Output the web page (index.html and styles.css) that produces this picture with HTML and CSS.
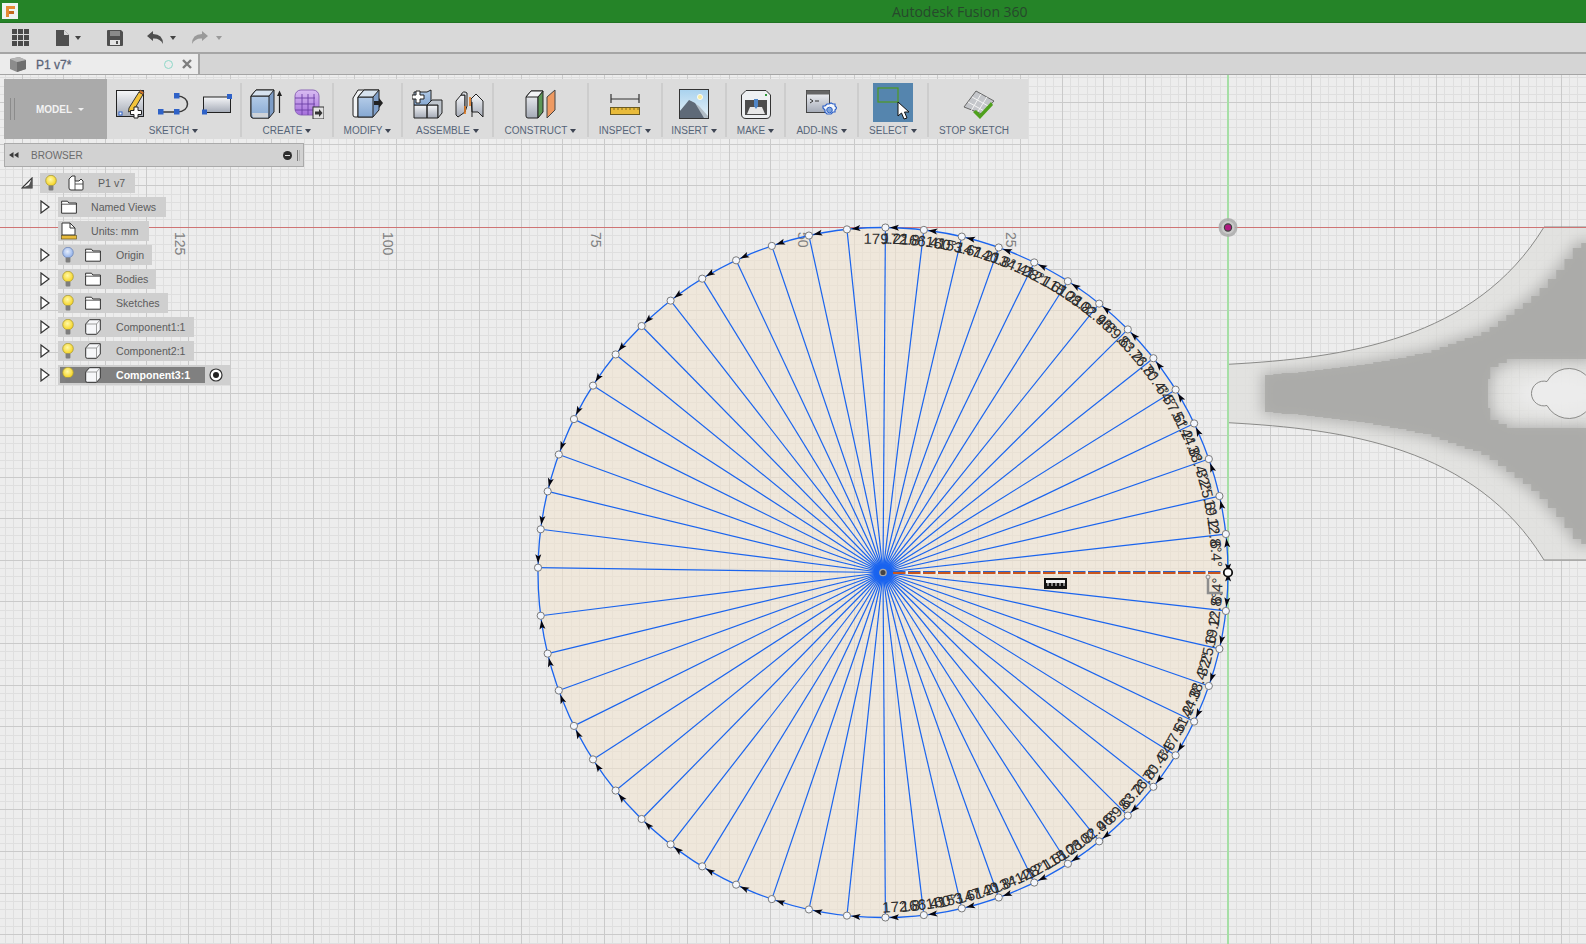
FILE: index.html
```html
<!DOCTYPE html>
<html lang="en">
<head>
<meta charset="utf-8">
<title>Autodesk Fusion 360</title>
<link rel="stylesheet" href="styles.css">
</head>
<body>
<svg class="defs" width="0" height="0" aria-hidden="true">
  <defs>
    <linearGradient id="gGrey" x1="0" y1="0" x2="0" y2="1"><stop offset="0" stop-color="#f6f7f9"/><stop offset="1" stop-color="#a4aab6"/></linearGradient>
    <linearGradient id="gBlue" x1="0" y1="0" x2="0" y2="1"><stop offset="0" stop-color="#b4cce8"/><stop offset="1" stop-color="#86a8d2"/></linearGradient>
    <linearGradient id="gPurple" x1="0" y1="0" x2="0" y2="1"><stop offset="0" stop-color="#d9bdf2"/><stop offset="1" stop-color="#a56fdc"/></linearGradient>
    <linearGradient id="gSky" x1="0" y1="0" x2="0" y2="1"><stop offset="0" stop-color="#a9d2ee"/><stop offset="1" stop-color="#e8f2f8"/></linearGradient>
    <radialGradient id="gBulb" cx=".45" cy=".4" r=".6"><stop offset="0" stop-color="#fff9a8"/><stop offset="1" stop-color="#f5d21e"/></radialGradient>
    <radialGradient id="gBulbBlue" cx=".45" cy=".4" r=".6"><stop offset="0" stop-color="#e6eefc"/><stop offset="1" stop-color="#8eaee8"/></radialGradient>
    <filter id="soft" x="-20%" y="-20%" width="140%" height="140%"><feGaussianBlur stdDeviation="7"/></filter>
    <filter id="softer" x="-40%" y="-60%" width="180%" height="220%"><feGaussianBlur stdDeviation="8"/></filter>
    <filter id="hubBlur" x="-50%" y="-50%" width="200%" height="200%"><feGaussianBlur stdDeviation="2"/></filter>
    <clipPath id="bodyClip"><path d="M1228 364.3C1345 358 1475 340 1544 227H1586V560H1544C1475 447 1345 429 1228 422.7Z"/></clipPath>
    <symbol id="bulb" viewBox="0 0 12 16"><circle cx="6" cy="5.6" r="5.3" fill="url(#gBulb)" stroke="#a89a3a" stroke-width=".8"/><rect x="3.6" y="10.5" width="4.8" height="5" rx="1" fill="#7d7d7d"/></symbol>
    <symbol id="bulbBlue" viewBox="0 0 12 16"><circle cx="6" cy="5.6" r="5.3" fill="url(#gBulbBlue)" stroke="#7088b8" stroke-width=".8"/><rect x="3.6" y="10.5" width="4.8" height="5" rx="1" fill="#7d7d7d"/></symbol>
    <symbol id="folder" viewBox="0 0 16 14"><path d="M.6 3.5V1.2H6.5L7.8 3H15.4V13.2H.6Z" fill="#fff" stroke="#333" stroke-width="1"/><path d="M.6 4.2H15.4" stroke="#333" stroke-width=".8"/></symbol>
    <symbol id="cube" viewBox="0 0 16 16"><path d="M.7 5 4.5.7H15.3V11L11.5 15.3H2.2Q.7 15.3.7 13.8Z" fill="#f6f7f9" stroke="#333" stroke-width="1"/><path d="M.7 5H11.5V15.3M11.5 5 15.3.7" fill="none" stroke="#777" stroke-width=".7"/></symbol>
    <symbol id="expand" viewBox="0 0 10 14"><path d="M1 1 9 7 1 13Z" fill="#fff" stroke="#333" stroke-width="1.2"/></symbol>
  </defs>
</svg>

<header class="titlebar">
  <svg class="applogo" width="16" height="16" viewBox="0 0 16 16"><rect width="16" height="16" fill="#eef3f2"/><path d="M4 3H13V6H7V8H12V11H7V14H4Z" fill="#e58b34"/><path d="M7 8H12V11H7Z" fill="#c46a1e"/></svg>
  <span class="apptitle">Autodesk Fusion 360</span>
</header>

<nav class="quickbar">
  <svg class="qa-grid" width="17" height="17" viewBox="0 0 17 17"><path fill="#4a4a4a" d="M0 0h5v5H0zM6 0h5v5H6zM12 0h5v5h-5zM0 6h5v5H0zM6 6h5v5H6zM12 6h5v5h-5zM0 12h5v5H0zM6 12h5v5H6zM12 12h5v5h-5z"/></svg>
  <span class="qa-file">
    <svg width="13" height="16" viewBox="0 0 13 16"><path fill="#4f4f4f" d="M0 0H8L13 5V16H0Z"/><path fill="#d8d8d8" d="M8 0V5H13L12 4 9 1Z"/></svg>
    <i class="caret dark"></i>
  </span>
  <svg class="qa-save" width="16" height="16" viewBox="0 0 16 16"><path fill="#4f4f4f" d="M0 1Q0 0 1 0H14L16 2V15Q16 16 15 16H1Q0 16 0 15Z"/><rect x="3" y="1" width="10" height="5" fill="#8a8a8a"/><rect x="3" y="10" width="10" height="5" fill="#e4e4e4"/><rect x="9" y="11" width="2" height="3" fill="#4f4f4f"/></svg>
  <span class="qa-undo">
    <svg width="16" height="13" viewBox="0 0 16 13"><path fill="#4f4f4f" d="M0 5 6 0V3Q16 3 16 13 13 7 6 7.5V10Z"/></svg>
    <i class="caret dark"></i>
  </span>
  <span class="qa-redo">
    <svg width="16" height="13" viewBox="0 0 16 13"><path fill="#9a9a9a" d="M16 5 10 0V3Q0 3 0 13 3 7 10 7.5V10Z"/></svg>
    <i class="caret soft"></i>
  </span>
</nav>

<div class="tabrow">
  <div class="tab">
    <svg class="tab-cube" width="16" height="15" viewBox="0 0 16 15"><path fill="#8c8c8c" d="M0 2 9 0 16 3V12L7 15 0 12Z"/><path fill="#6f6f6f" d="M7 5 16 3V12L7 15Z"/><path fill="#b5b5b5" d="M0 2 9 0 16 3 7 5Z"/></svg>
    <span class="tab-name">P1 v7*</span>
    <i class="tab-dot"></i>
    <svg class="tab-x" width="10" height="10" viewBox="0 0 10 10"><path d="M1 1 9 9M9 1 1 9" stroke="#7d7d7d" stroke-width="2.4"/></svg>
  </div>
</div>

<main class="canvas">
  <svg id="scene" class="scene" width="1586" height="869" viewBox="0 75 1586 869">
    <g id="grid"></g>
    <g class="body">
      <path class="body-fill" d="M1228 364.3C1345 358 1475 340 1544 227H1586V560H1544C1475 447 1345 429 1228 422.7Z"/>
      <g clip-path="url(#bodyClip)">
        <path id="bodyHalo" class="body-halo" filter="url(#soft)"/>
        <ellipse class="body-glow" cx="1556" cy="393.5" rx="42" ry="17" filter="url(#softer)"/>
        <path id="bodyCore" class="body-core"/>
      </g>
    </g>
    <path class="body-edge" d="M1586 227H1544C1475 340 1345 358 1228 364.3V422.7C1345 429 1475 447 1544 560H1586"/>
    <path class="keyhole" d="M1547 381.5A12.4 12.4 0 1 0 1547 405.5A25 25 0 1 0 1547 381.5Z"/>
    <line class="axis-red" x1="0" y1="227.5" x2="1586" y2="227.5"/>
    <line class="axis-green" x1="1228" y1="75" x2="1228" y2="944"/>
    <circle class="disc" cx="883" cy="572.5" r="345"/>
    <g class="axis">
      <text transform="translate(180 232) rotate(90)">125</text>
      <text transform="translate(388 232) rotate(90)">100</text>
      <text transform="translate(596 232) rotate(90)">75</text>
      <text transform="translate(803 232) rotate(90)">50</text>
      <text transform="translate(1011 232) rotate(90)">25</text>
    </g>
    <circle class="hub-glow" cx="883" cy="572.5" r="11" filter="url(#hubBlur)"/>
    <g id="spokes"></g>
    <circle class="rim" cx="883" cy="572.5" r="345"/>
    <g class="baseline">
      <line class="base-white" x1="893" y1="572.5" x2="1228" y2="572.5"/>
      <line class="base-blue" x1="893" y1="571.6" x2="1228" y2="571.6"/>
      <line class="base-orange" x1="893" y1="573" x2="1228" y2="573"/>
    </g>
    <g id="labels"></g>
    <g id="arrows"></g>
    <g id="points"></g>
    <circle class="hub" cx="883" cy="572.5" r="3.2"/>
    <circle class="zero" cx="1228" cy="572.5" r="4.2"/>
    <path class="constraint" d="M1208 577V593H1223M1208 593V588"/>
    <circle class="constraint-dot" cx="1208" cy="577" r="2"/>
    <g class="dim-icon" transform="translate(1044 578)">
      <rect width="23" height="11" fill="#111"/>
      <rect x="2" y="2" width="19" height="3" fill="#f2f2f2"/>
      <path d="M4 5V8M8 5V8M12 5V8M16 5V8M20 5V8" stroke="#f2f2f2" stroke-width="1"/>
    </g>
    <circle class="origin-a" cx="1228" cy="227.5" r="9.5"/>
    <circle class="origin-b" cx="1228" cy="227.5" r="6.5"/>
    <circle class="origin-c" cx="1228" cy="227.5" r="3.6"/>
  </svg>

  <section class="toolpanel">
    <div class="model">
      <i class="grip"></i>
      <span class="model-name">MODEL</span>
      <i class="caret light"></i>
    </div>

    <div class="group">
      <div class="tools">
        <svg width="30" height="30" viewBox="0 0 30 30"><rect x=".5" y="1.5" width="27" height="26" fill="url(#gGrey)" stroke="#222"/><rect x="3" y="23" width="3" height="3" fill="#fff" stroke="#2f62c8"/><path d="M13 19 23 3 27 5.5 18 21 12.5 23Z" fill="#f3c43a" stroke="#333"/><path d="M23 3 27 5.5 28 3.5 24.5 1Z" fill="#d9772c" stroke="#333" stroke-width=".6"/><path d="M18 18h4v3.5h3.5v4H22V29h-4v-3.5h-3.5v-4H18Z" fill="#fff" stroke="#222"/></svg>
        <svg width="32" height="22" viewBox="0 0 32 22"><path d="M3 19H19M19 3C33 3 33 19 19 19" fill="none" stroke="#3a3a3a" stroke-width="1.5"/><path fill="#2f62c8" d="M0 16h5.5v5.5H0zM16 16h5.5v5.5H16zM16 0h5.5v5.5H16z"/></svg>
        <svg width="30" height="21" viewBox="0 0 30 21"><rect x="1.5" y="3" width="27" height="15.5" fill="url(#gGrey)" stroke="#222"/><path fill="#2f62c8" d="M25 0h5v5h-5zM0 15.5h5v5H0z"/></svg>
      </div>
      <span class="group-label">SKETCH<i class="caret slate"></i></span>
    </div>

    <div class="group">
      <div class="tools">
        <svg width="32" height="30" viewBox="0 0 32 30"><path d="M1 7 6 1H24V23L19 29H3Q1 29 1 27Z" fill="#7d9cc6" stroke="#222"/><path d="M1 7H19V29H3Q1 29 1 27Z" fill="url(#gBlue)" stroke="#222"/><path d="M1 7 6 1H24L19 7Z" fill="#d6e2ef" stroke="#222"/><path d="M2 24H18V28.5H3Z" fill="#cfd3d8"/><path d="M29.5 24V5" stroke="#222" stroke-width="1.2"/><path d="M27 7 29.5 1.5 32 7Z" fill="#222"/></svg>
        <svg width="30" height="30" viewBox="0 0 30 30"><rect x="1" y="1" width="24" height="25" rx="6" fill="url(#gPurple)" stroke="#8d67b8"/><path d="M1 9H21M1 15H21M1 21H21M8 5V26M14 5V26M20 5V26" stroke="#6b3fa5" stroke-width=".9" fill="none"/><rect x="19" y="18" width="11" height="12" fill="#e2e2e2" stroke="#333"/><path d="M21 22.5H25V20L28.5 24 25 28V25.5H21Z" fill="#333"/></svg>
      </div>
      <span class="group-label">CREATE<i class="caret slate"></i></span>
    </div>

    <div class="group">
      <div class="tools">
        <svg width="31" height="30" viewBox="0 0 31 30"><path d="M1 9 6 1H12L6 28H3Q1 28 1 26Z" fill="#f1f3f5" stroke="#222"/><path d="M6 8 12 1H27V21L21 28H6Z" fill="#7f9fc9" stroke="#222"/><path d="M6 8H21V28H6Z" fill="url(#gBlue)" stroke="#222"/><path d="M6 8 12 1H27L21 8Z" fill="#d7e3ef" stroke="#222"/><path d="M22 12H27V9L31 14 27 19V16H22Z" fill="#222"/></svg>
      </div>
      <span class="group-label">MODIFY<i class="caret slate"></i></span>
    </div>

    <div class="group">
      <div class="tools">
        <svg width="31" height="30" viewBox="0 0 31 30"><path d="M2 16H15V29H2ZM15 16H26V29H15Z" fill="url(#gGrey)" stroke="#222"/><path d="M15 16 20 11H30V24L26 29V16Z" fill="#bfc5cd" stroke="#222"/><path d="M2 3H15L19 1V12L15 16H2Z" fill="url(#gBlue)" stroke="#222"/><path d="M4 2h4v4h4v4H8v4H4v-4H0V6h4Z" fill="#fff" stroke="#222"/></svg>
        <svg width="29" height="28" viewBox="0 0 29 28"><path d="M1 11 6 5H10V22L3 27 1 25Z" fill="url(#gGrey)" stroke="#222"/><path d="M6 5Q8 0 12 3V16L10 22V5Z" fill="#d5d8dd" stroke="#222"/><path d="M16 9 21 4 28 11V27L23 22H17Z" fill="url(#gGrey)" stroke="#222"/><path d="M17 12V27" stroke="#222"/><path d="M10 16V24M15 7V16" stroke="#e57a1e" stroke-width="1.6"/></svg>
      </div>
      <span class="group-label">ASSEMBLE<i class="caret slate"></i></span>
    </div>

    <div class="group">
      <div class="tools">
        <svg width="31" height="30" viewBox="0 0 31 30"><path d="M1 8 6 2H18L13 8V29H3Q1 29 1 27Z" fill="url(#gGrey)" stroke="#222"/><path d="M13 8 18 2V23L13 29Z" fill="#5c9656" stroke="#222"/><path d="M1 8 6 2H18L13 8Z" fill="#f2f4f6" stroke="#222"/><path d="M22 8 30 1V21L22 29Z" fill="#ee9a62" stroke="#444"/></svg>
      </div>
      <span class="group-label">CONSTRUCT<i class="caret slate"></i></span>
    </div>

    <div class="group">
      <div class="tools">
        <svg width="30" height="22" viewBox="0 0 30 22"><path d="M1 6H29M1 1V10M29 1V10" stroke="#333" stroke-width="1.2" fill="none"/><rect x=".5" y="14.5" width="29" height="7" fill="#e9bb3a" stroke="#6b5a20"/><path d="M4 15v2M8 15v2M12 15v2M16 15v2M20 15v2M24 15v2M28 15v2" stroke="#6b5a20" stroke-width=".8"/></svg>
      </div>
      <span class="group-label">INSPECT<i class="caret slate"></i></span>
    </div>

    <div class="group">
      <div class="tools">
        <svg width="30" height="30" viewBox="0 0 30 30"><rect x=".5" y=".5" width="29" height="29" fill="url(#gSky)" stroke="#333"/><circle cx="21" cy="8" r="2.6" fill="#f7eda4" stroke="#fff" stroke-width=".8"/><path d="M1 29V22L12 12 20 17 29 27V29Z" fill="#b2bdc6"/><path d="M1 29V22L10 11 16 14 25 29Z" fill="#5f6a78"/></svg>
      </div>
      <span class="group-label">INSERT<i class="caret slate"></i></span>
    </div>

    <div class="group">
      <div class="tools">
        <svg width="30" height="29" viewBox="0 0 30 29"><path d="M5 .5H25L29.5 5V24Q29.5 28.5 25 28.5H5Q.5 28.5.5 24V5Z" fill="#eef0f2" stroke="#333"/><rect x="4" y="10" width="22" height="15" fill="#4d4d4d"/><path d="M9 17H21L24 24H6Z" fill="#e8e8e8"/><path d="M13 9h4v7l-2 3-2-3Z" fill="#4f86c8"/><rect x="24" y="4" width="2" height="2" fill="#2e9a3a"/></svg>
      </div>
      <span class="group-label">MAKE<i class="caret slate"></i></span>
    </div>

    <div class="group">
      <div class="tools">
        <svg width="31" height="29" viewBox="0 0 31 29"><rect x=".5" y=".5" width="23" height="22" fill="url(#gGrey)" stroke="#444"/><rect x=".5" y=".5" width="23" height="4" fill="#666"/><path d="M4 9 7 11 4 13M9 11H13" stroke="#333" fill="none"/><path d="M23 14l2-1 2 1 2 0 0 2 2 2-2 2 0 2-2 0-2 2-2 0-2 0-2-2 0-2-2-2 0-2 2 0 2-2Z" fill="#f4f7fb" stroke="#2f62c8" stroke-width="1.2"/><circle cx="23.5" cy="20" r="2.8" fill="#7da3da" stroke="#2f62c8"/></svg>
      </div>
      <span class="group-label">ADD-INS<i class="caret slate"></i></span>
    </div>

    <div class="group">
      <div class="tools">
        <svg class="select-btn" width="40" height="39" viewBox="0 0 40 39"><rect width="40" height="39" fill="#5585ae"/><rect x="5" y="5" width="20" height="14" fill="none" stroke="#4f9a20" stroke-width="1.2"/><path d="M25 19V33L28.5 30 31 36 34 35 31.5 29 36 29Z" fill="#fff" stroke="#111"/></svg>
      </div>
      <span class="group-label">SELECT<i class="caret slate"></i></span>
    </div>

    <div class="group last">
      <div class="tools">
        <svg width="32" height="29" viewBox="0 0 32 29"><path d="M1 17 13 1 31 11 19 24Z" fill="#c4c6ca" stroke="#666"/><path d="M5 12 23 22M9 7 27 17M8 21 18 4M14 23 24 7" stroke="#f4f4f4"/><path d="M13 20 17 24 28 12 30 15 17 29 10 22Z" fill="#4fa01c"/></svg>
      </div>
      <span class="group-label stop-label">STOP SKETCH</span>
    </div>
  </section>

  <aside class="browser">
    <div class="browser-head">
      <svg class="rewind" width="10" height="6" viewBox="0 0 10 6"><path fill="#3a3a3a" d="M0 3 4.5 0V6ZM5 3 9.5 0V6Z"/></svg>
      <span class="browser-title">BROWSER</span>
      <i class="minus"></i>
      <i class="head-grip"></i>
    </div>
    <ul class="tree">
      <li class="row root">
        <svg class="root-tri" width="12" height="12" viewBox="0 0 12 12"><path d="M11 1V11H1Z" fill="#fff" stroke="#333" stroke-width="1.2"/><path d="M11 1V11H1L8 8Z" fill="#555"/></svg>
        <div class="node node-root">
          <svg class="bulb" width="12" height="16"><use href="#bulb"/></svg>
          <svg class="root-icon" width="16" height="16" viewBox="0 0 16 16"><path d="M1 4 4 1H7V6H11L13 4 15 6V14Q15 15 14 15H3Q1 15 1 13Z" fill="#fff" stroke="#333"/><path d="M7 6V15M7 9H15" stroke="#333" stroke-width=".8"/></svg>
          <span class="name">P1 v7</span>
        </div>
      </li>
      <li class="row">
        <svg class="exp" width="10" height="14"><use href="#expand"/></svg>
        <div class="node node-plain">
          <svg class="icon" width="16" height="14"><use href="#folder"/></svg>
          <span class="name">Named Views</span>
        </div>
      </li>
      <li class="row">
        <span class="exp-gap"></span>
        <div class="node node-plain">
          <svg class="icon" width="16" height="18" viewBox="0 0 16 18"><path d="M1 13V1H9L14 6V13Z" fill="#fff" stroke="#333"/><path d="M9 1V6H14" fill="none" stroke="#333"/><rect x=".5" y="13.5" width="15" height="3.5" fill="#e9bb3a" stroke="#6b5a20" stroke-width=".7"/></svg>
          <span class="name">Units: mm</span>
        </div>
      </li>
      <li class="row">
        <svg class="exp" width="10" height="14"><use href="#expand"/></svg>
        <div class="node">
          <svg class="bulb" width="12" height="16"><use href="#bulbBlue"/></svg>
          <svg class="icon" width="16" height="14"><use href="#folder"/></svg>
          <span class="name">Origin</span>
        </div>
      </li>
      <li class="row">
        <svg class="exp" width="10" height="14"><use href="#expand"/></svg>
        <div class="node">
          <svg class="bulb" width="12" height="16"><use href="#bulb"/></svg>
          <svg class="icon" width="16" height="14"><use href="#folder"/></svg>
          <span class="name">Bodies</span>
        </div>
      </li>
      <li class="row">
        <svg class="exp" width="10" height="14"><use href="#expand"/></svg>
        <div class="node">
          <svg class="bulb" width="12" height="16"><use href="#bulb"/></svg>
          <svg class="icon" width="16" height="14"><use href="#folder"/></svg>
          <span class="name">Sketches</span>
        </div>
      </li>
      <li class="row">
        <svg class="exp" width="10" height="14"><use href="#expand"/></svg>
        <div class="node">
          <svg class="bulb" width="12" height="16"><use href="#bulb"/></svg>
          <svg class="icon" width="16" height="16"><use href="#cube"/></svg>
          <span class="name">Component1:1</span>
        </div>
      </li>
      <li class="row">
        <svg class="exp" width="10" height="14"><use href="#expand"/></svg>
        <div class="node">
          <svg class="bulb" width="12" height="16"><use href="#bulb"/></svg>
          <svg class="icon" width="16" height="16"><use href="#cube"/></svg>
          <span class="name">Component2:1</span>
        </div>
      </li>
      <li class="row">
        <svg class="exp" width="10" height="14"><use href="#expand"/></svg>
        <div class="node node-wrap">
          <div class="node-active">
            <svg class="bulb" width="12" height="16"><use href="#bulb"/></svg>
            <svg class="icon" width="16" height="16"><use href="#cube"/></svg>
            <span class="name">Component3:1</span>
          </div>
          <svg class="radio" width="14" height="14" viewBox="0 0 14 14"><circle cx="7" cy="7" r="6" fill="#fff" stroke="#333" stroke-width="1.2"/><circle cx="7" cy="7" r="3" fill="#222"/></svg>
        </div>
      </li>
    </ul>
  </aside>
</main>
<script src="script.js"></script>
</body>
</html>
```
FILE: styles.css
```css
* { box-sizing: border-box; }
html, body { margin: 0; padding: 0; }
body {
  width: 1586px;
  height: 944px;
  overflow: hidden;
  display: flex;
  flex-direction: column;
  font-family: "Liberation Sans", Arial, sans-serif;
  background: #ededed;
}
.defs { position: absolute; }
i { display: block; font-style: normal; }

.titlebar {
  height: 23px;
  flex: none;
  display: flex;
  align-items: center;
  position: relative;
  background: #258428;
  border-bottom: 1px solid #1f7323;
}
.applogo { margin: 0 0 0 2px; flex: none; }
.apptitle {
  font-family: "Open Sans", sans-serif;
  font-size: 14px;
  color: #27482c;
  margin-left: 874px;
}

.quickbar {
  height: 31px;
  flex: none;
  display: flex;
  align-items: center;
  background: #d9d9d9;
  border-bottom: 2px solid #a5a5a5;
}
.qa-grid { margin-left: 12px; }
.qa-file { display: flex; align-items: center; gap: 6px; margin-left: 27px; }
.qa-save { margin-left: 26px; }
.qa-undo { display: flex; align-items: center; gap: 7px; margin-left: 24px; }
.qa-redo { display: flex; align-items: center; gap: 8px; margin-left: 16px; }

.caret {
  width: 0;
  height: 0;
  border-left: 3.5px solid transparent;
  border-right: 3.5px solid transparent;
  border-top: 4px solid #444;
}
.caret.soft { border-top-color: #9a9a9a; }
.caret.light { border-top-color: #f0f0f0; border-left-width: 3px; border-right-width: 3px; border-top-width: 3px; margin-left: 6px; }
.caret.slate { border-left-width: 3px; border-right-width: 3px; border-top-width: 4px; border-top-color: #3f4654; margin-left: 3px; }

.tabrow {
  height: 21px;
  flex: none;
  background: #d5d5d5;
  border-bottom: 1px solid #a5a5a5;
}
.tab {
  width: 200px;
  height: 20px;
  display: flex;
  align-items: center;
  background: #ececec;
  border-right: 2px solid #a5a5a5;
  padding-left: 10px;
}
.tab-name { margin-left: 10px; width: 128px; padding-top: 2px; font-size: 12px; color: #5b6478; -webkit-text-stroke: .3px #5b6478; }
.tab-dot { width: 9px; height: 9px; border-radius: 50%; border: 1.5px solid #8ed8c8; }
.tab-x { margin-left: 9px; }

.canvas { position: relative; flex: 1; min-height: 0; overflow: hidden; }
.scene { display: block; }

.axis text { font-size: 14px; fill: #808080; dominant-baseline: central; }
.body-fill { fill: #dfdfdc; fill-opacity: .8; }
.body-halo { fill: #b4b4b2; stroke: #b4b4b2; stroke-width: 6; }
.body-glow { fill: #ececec; }
.body-core { fill: #a9a9a6; fill-opacity: .8; }
.body-edge { fill: none; stroke: #8a8a88; stroke-width: 1; }
.keyhole { fill: #ededed; fill-opacity: .6; stroke: #8a8a88; stroke-width: 1; }
.axis-red { stroke: #cf7474; stroke-width: 1; }
.axis-green { stroke: #a6dfa6; stroke-width: 2; }
.disc { fill: rgb(240, 226, 207); fill-opacity: .6; }
.hub-glow { fill: #0a58ff; }
.spoke { stroke: #1a64ee; stroke-width: 1.2; }
.rim { fill: none; stroke: #1a64ee; stroke-width: 1.3; }
.base-white { stroke: #f4f4f4; stroke-width: 3; }
.base-blue { stroke: #2a62c6; stroke-width: 1.3; stroke-dasharray: 12.5 2.5; }
.base-orange { stroke: #c9561e; stroke-width: 1.8; stroke-dasharray: 12.5 2.5; }
.dim-text { font-size: 15px; fill: #2c2c2c; text-anchor: middle; dominant-baseline: central; }
.arrow { fill: #05050f; }
.point { fill: #f3f6fc; stroke: #7a7a7a; stroke-width: 1; }
.hub { fill: #444; stroke: #a8a8a8; stroke-width: 1.3; }
.zero { fill: #fff; stroke: #111; stroke-width: 1.8; }
.constraint { fill: none; stroke: #8d8d8d; stroke-width: 2.5; }
.constraint-dot { fill: #e8e8e8; stroke: #8d8d8d; stroke-width: 1; }
.origin-a { fill: #a9a9a9; fill-opacity: .85; }
.origin-b { fill: #c9c9c9; }
.origin-c { fill: #b01a80; stroke: #3f3f3f; stroke-width: 1.2; }
.grid-minor { fill: none; stroke: #dfdfdf; stroke-width: 1; shape-rendering: crispEdges; }
.grid-major { fill: none; stroke: #cacaca; stroke-width: 1; shape-rendering: crispEdges; }

.toolpanel {
  position: absolute;
  left: 4px;
  top: 4px;
  width: 1024px;
  height: 60px;
  display: grid;
  grid-template-columns: 103px 135px 92px 69px 91px 95px 74px 64px 59px 73px 70px 99px;
  background: #dcdcdc;
}
.model {
  display: flex;
  align-items: center;
  background: #aaaaaa;
  padding-left: 6px;
}
.grip { width: 5px; height: 22px; border-left: 1px solid #8c8c8c; border-right: 1px solid #8c8c8c; }
.model-name { margin-left: 21px; padding-top: 1px; font-size: 10px; font-weight: 700; color: #f2f2f2; }
.group {
  display: flex;
  flex-direction: column;
  align-items: center;
  margin: 4px 0 2px;
  padding-top: 4px;
  border-right: 2px solid #cdcdcd;
}
.group.last { border-right: none; }
.tools { height: 34px; display: flex; align-items: center; gap: 12px; }
.select-btn { margin: -4px 0 -1px; }
.group-label {
  display: flex;
  align-items: center;
  margin-top: 3px;
  height: 13px;
  font-size: 10px;
  color: #566478;
}
.stop-label { margin-right: 9px; }

.browser { position: absolute; left: 4px; top: 68px; width: 300px; }
.browser-head {
  height: 24px;
  display: flex;
  align-items: center;
  background: #d2d2d2;
  border: 1px solid #aaaaaa;
  padding-left: 4px;
}
.browser-title { margin-left: 12px; width: 252px; font-size: 10px; color: #6b6b6b; }
.minus { width: 9px; height: 9px; border-radius: 50%; background: #2e2e2e; position: relative; }
.minus::after { content: ""; position: absolute; left: 2px; top: 4px; width: 5px; height: 1px; background: #ddd; }
.head-grip { width: 3px; height: 11px; margin-left: 5px; border-left: 1px solid #7a7a7a; border-right: 1px solid #b5b5b5; }

.tree { list-style: none; margin: 4px 0 0; padding: 0; }
.row { height: 24px; display: flex; align-items: center; padding-left: 36px; }
.row.root { padding-left: 17px; }
.root-tri { margin-right: 7px; }
.exp { margin-right: 8px; flex: none; }
.exp-gap { width: 18px; flex: none; }
.node {
  height: 20px;
  display: flex;
  align-items: center;
  background: #cfcfcf;
  padding: 0 8px 0 4px;
  font-size: 10.6px;
  color: #5c5c5c;
}
.bulb { flex: none; }
.node .icon { margin-left: 11px; flex: none; }
.node-plain { padding-left: 3px; padding-right: 10px; }
.node-plain .icon { margin-left: 0; }
.node .name { margin-left: 15px; white-space: nowrap; }
.node-plain .name { margin-left: 14px; }
.node-root { padding-left: 5px; padding-right: 10px; }
.node-root .name { margin-left: 14px; }
.root-icon { margin-left: 11px; }
.node-wrap { padding: 0 7px 0 2px; }
.node-active {
  height: 16px;
  width: 145px;
  display: flex;
  align-items: center;
  background: #808080;
  padding-left: 2px;
}
.node-active .name { color: #fff; font-weight: 700; }
.radio { margin-left: 4px; }
```
FILE: script.js
```js
var SVG_NS = "http://www.w3.org/2000/svg";
var CX = 883, CY = 572.5, R = 345, STEP = 6.4, UNIT = 8.32;

function add(parent, tag, attrs, text) {
  var node = document.createElementNS(SVG_NS, tag);
  Object.keys(attrs).forEach(function (key) { node.setAttribute(key, attrs[key]); });
  if (text) node.textContent = text;
  parent.appendChild(node);
  return node;
}
function rad(deg) { return deg * Math.PI / 180; }
function polar(deg, r) {
  return [CX + r * Math.cos(rad(deg)), CY - r * Math.sin(rad(deg))];
}

/* grid, in model units from the sketch origin */
(function () {
  var minor = "", major = "", n, v;
  for (n = -150; n <= 50; n++) {
    v = Math.round(1228 + UNIT * n) + 0.5;
    if (n % 5 === 0) major += "M" + v + " 75V944"; else minor += "M" + v + " 75V944";
  }
  for (n = -25; n <= 90; n++) {
    v = Math.round(227 + UNIT * n) + 0.5;
    if (n % 5 === 0) major += "M0 " + v + "H1586"; else minor += "M0 " + v + "H1586";
  }
  var grid = document.getElementById("grid");
  add(grid, "path", { "class": "grid-minor", d: minor });
  add(grid, "path", { "class": "grid-major", d: major });
})();

/* the stepped, coarse-mesh shading of the body on the right */
(function () {
  var upper = [[1265,375],[1290,372.7],[1343,367],[1387,360],[1427,352],[1480,333],[1507,315],[1533,295],[1558,268],[1577,243],[1590,243]];
  var notch = [[1590,359],[1515,359],[1497,368],[1488,382],[1488,393.5]];
  function at(line, x) {
    for (var i = 1; i < line.length; i++) {
      var a = line[i - 1], b = line[i];
      if (x >= Math.min(a[0], b[0]) && x <= Math.max(a[0], b[0])) {
        return a[0] === b[0] ? a[1] : a[1] + (b[1] - a[1]) * (x - a[0]) / (b[0] - a[0]);
      }
    }
    return line[line.length - 1][1];
  }
  var half = [], x, y, prev;
  for (x = 1265; x < 1590; x += UNIT) {
    y = Math.round(at(upper, x));
    if (prev !== undefined) half.push([x, prev]);
    half.push([x, y]);
    prev = y;
  }
  half.push([1590, prev]);
  prev = undefined;
  for (x = 1590; x > 1488; x -= UNIT) {
    y = Math.round(at(notch, x));
    if (prev !== undefined) half.push([x, prev]);
    half.push([x, y]);
    prev = y;
  }
  half.push([1488, prev], [1488, 393.5]);
  var full = half.concat(half.slice().reverse().map(function (p) { return [p[0], 787 - p[1]]; }));
  var d = "M" + full.map(function (p) { return p[0].toFixed(1) + " " + p[1]; }).join("L") + "Z";
  document.getElementById("bodyHalo").setAttribute("d", d);
  document.getElementById("bodyCore").setAttribute("d", d);
})();

/* spokes at k * 6.4 degrees, dimension text halfway along each measured arc */
(function () {
  var spokes = document.getElementById("spokes");
  var labels = document.getElementById("labels");
  var arrows = document.getElementById("arrows");
  var points = document.getElementById("points");
  var gap = 4.5 / R * 180 / Math.PI;

  function arrow(deg, sign) {
    var tip = polar(deg - sign * gap, R);
    var dir = Math.atan2(-sign * Math.cos(rad(deg)), -sign * Math.sin(rad(deg))) * 180 / Math.PI;
    add(arrows, "path", {
      "class": "arrow",
      d: "M0 0L-9 -3L-7 0L-9 3Z",
      transform: "translate(" + tip[0].toFixed(2) + " " + tip[1].toFixed(2) + ") rotate(" + dir.toFixed(2) + ")"
    });
  }

  for (var k = -27; k <= 28; k++) {
    var deg = k * STEP;
    if (k !== 0) {
      var end = polar(deg, R);
      add(spokes, "line", { "class": "spoke", x1: CX, y1: CY, x2: end[0].toFixed(2), y2: end[1].toFixed(2) });
      add(points, "circle", { "class": "point", cx: end[0].toFixed(2), cy: end[1].toFixed(2), r: 3.6 });
      arrow(deg, k > 0 ? 1 : -1);
      var mid = deg / 2;
      var pos = polar(mid, 334);
      var rot = k > 0 ? 90 - mid : -90 - mid;
      var value = Number((Math.abs(k) * STEP).toFixed(1)) + "\u00b0";
      add(labels, "text", {
        "class": "dim-text",
        transform: "translate(" + pos[0].toFixed(2) + " " + pos[1].toFixed(2) + ") rotate(" + rot.toFixed(2) + ")"
      }, value);
    } else {
      add(spokes, "line", { "class": "spoke", x1: CX, y1: CY, x2: CX + R, y2: CY });
      arrow(gap, 1);
      arrow(-gap, -1);
    }
  }
})();
```
